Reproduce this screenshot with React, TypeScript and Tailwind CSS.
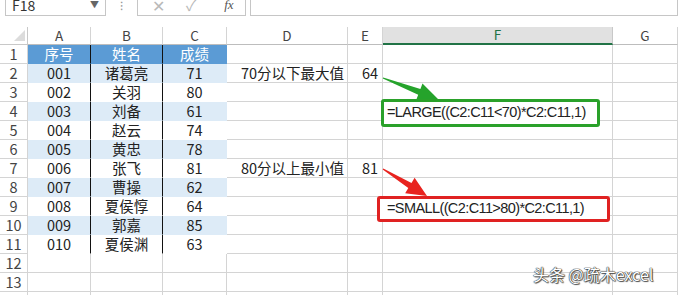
import React from 'react';

const font = { fontFamily: '"Noto Sans CJK SC", "Liberation Sans", sans-serif' };
const arial = { fontFamily: '"Liberation Sans", Arial, sans-serif', letterSpacing: '-0.6px' };

const cols = ['A', 'B', 'C', 'D', 'E', 'F', 'G'];

const table = [
  ['001', '诸葛亮', '71'],
  ['002', '关羽', '80'],
  ['003', '刘备', '61'],
  ['004', '赵云', '74'],
  ['005', '黄忠', '78'],
  ['006', '张飞', '81'],
  ['007', '曹操', '62'],
  ['008', '夏侯惇', '64'],
  ['009', '郭嘉', '85'],
  ['010', '夏侯渊', '63'],
];

function FormulaBar() {
  return (
    <div className="h-[27px] flex items-start text-[#333]">
      <div className="ml-[5px] mt-[-6px] w-[101px] h-[22px] border border-[#c6c6c6] flex items-center justify-between pl-[6px] pr-[6px] text-[14px]">
        <span>F18</span>
        <span className="text-[9px] text-[#666]">▼</span>
      </div>
      <div className="w-[31px] text-center text-[#999] text-[12px] leading-[10px]">⁝</div>
      <div className="mt-[-6px] w-[109px] h-[22px] border border-[#c6c6c6] flex items-center text-[#b9b9b9]">
        <span className="ml-[14px] text-[16px]">✕</span>
        <span className="ml-[21px] text-[15px]">✓</span>
        <span className="ml-[28px] text-[13px] italic text-[#555]" style={{ fontFamily: '"Liberation Serif", serif' }}>fx</span>
      </div>
      <div className="ml-[4px] mt-[-6px] flex-1 h-[22px] border border-[#c6c6c6]" />
    </div>
  );
}

function HeaderRow() {
  return (
    <>
      <div className="h-[18px] border-r border-b border-[#c8c8c8] relative">
        <div className="absolute right-[2px] bottom-[3px] w-0 h-0 border-l-[11px] border-l-transparent border-b-[11px] border-b-[#dcdcdc]" />
      </div>
      {cols.map((c) => (
        <div
          key={c}
          className={
            c === 'F'
              ? 'h-[18px] bg-[#e1e1e1] border-r border-[#c8c8c8] border-b-2 border-b-[#217346] flex items-center justify-center text-[13.5px] text-[#217346]'
              : 'h-[18px] border-r border-b border-[#d4d4d4] border-b-[#bdbdbd] flex items-center justify-center text-[13.5px] text-[#444]'
          }
        >
          {c}
        </div>
      ))}
    </>
  );
}

function Cell({ className = '', children }: { className?: string; children?: React.ReactNode }) {
  return <div className={`h-[19px] border-r border-b flex items-center overflow-visible whitespace-nowrap ${className}`}>{children}</div>;
}

export default function App() {
  const rows = Array.from({ length: 14 }, (_, i) => i + 1);

  return (
    <div className="relative w-[678px] h-[295px] overflow-hidden bg-white text-[#222]" style={font}>
      <FormulaBar />
      <div className="grid grid-cols-[28px_63px_72px_64px_121px_35px_230px_65px] leading-none">
        <HeaderRow />
        {rows.map((r) => {
          const inTable = r <= 11;
          const isHead = r === 1;
          const band = r % 2 === 0;
          const tbg = isHead ? 'bg-[#5b9bd5] text-white' : band ? 'bg-[#ddebf7]' : 'bg-white';
          const data = r >= 2 && r <= 11 ? table[r - 2] : isHead ? ['序号', '姓名', '成绩'] : null;
          return (
            <React.Fragment key={r}>
              <Cell className="border-[#d4d4d4] justify-center text-[14.5px] text-[#444]">{r}</Cell>
              {[0, 1, 2].map((j) =>
                inTable ? (
                  <Cell
                    key={j}
                    className={`${tbg} justify-center text-[14.5px] border-b-transparent ${
                      j < 2 ? 'border-r-[#111]' : 'border-r-transparent'
                    }`}
                  >
                    {data && data[j]}
                  </Cell>
                ) : (
                  <Cell key={j} className="border-[#d4d4d4]" />
                )
              )}
              <Cell className="border-[#d4d4d4] justify-end pr-[3px] text-[14.5px]">
                {r === 2 ? '70分以下最大值' : r === 7 ? '80分以上最小值' : ''}
              </Cell>
              <Cell className="border-[#d4d4d4] justify-end pr-[4px] text-[14.5px]">
                {r === 2 ? '64' : r === 7 ? '81' : ''}
              </Cell>
              <Cell className="border-[#d4d4d4]" />
              <Cell className="border-[#d4d4d4]" />
            </React.Fragment>
          );
        })}
      </div>

      {/* arrows */}
      <svg className="absolute left-0 top-0 pointer-events-none" width="678" height="295">
        <polygon
          points="383.2,77.5 420.4,89.1 422.5,83.5 438,99 416.1,100.3 418.2,94.7 382.8,78.5"
          fill="#25a32b"
        />
        <polygon
          points="383.3,168.6 411.5,182.9 414.6,177.8 427,196 405.2,193.2 408.3,188.1 382.7,169.4"
          fill="#e8231f"
        />
      </svg>

      {/* formula callouts */}
      <div
        className="absolute left-[381px] top-[99px] w-[219px] h-[28px] border-[3px] border-[#2aa12a] rounded-[3px] bg-white flex items-center pl-[3px] text-[14.5px] text-[#222] whitespace-nowrap"
        style={arial}
      >
        =LARGE((C2:C11&lt;70)*C2:C11,1)
      </div>
      <div
        className="absolute left-[377px] top-[196px] w-[233px] h-[26px] border-[3px] border-[#e02222] rounded-[3px] bg-white flex items-center pl-[7px] text-[14.5px] text-[#222] whitespace-nowrap"
        style={arial}
      >
        =SMALL((C2:C11&gt;80)*C2:C11,1)
      </div>

      {/* watermark */}
      <div
        className="absolute left-[533px] top-[262px] text-[16px] text-white whitespace-nowrap"
        style={{ textShadow: '0 0 1px #333, 0 0 1px #333, 0 0 1px #333, 1px 1px 1px #555' }}
      >
        头条 @疏木excel
      </div>
    </div>
  );
}
